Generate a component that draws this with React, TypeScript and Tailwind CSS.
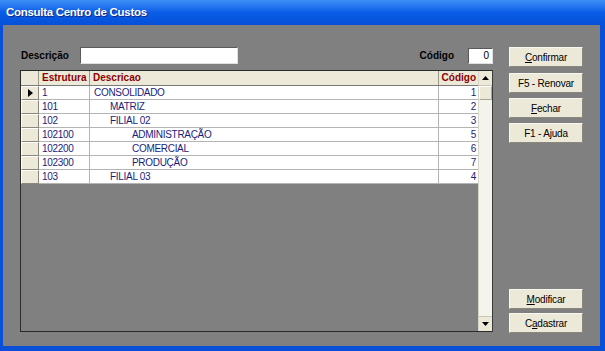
import React from 'react';

const font = { fontFamily: '"Liberation Sans", Arial, sans-serif' };

const rows = [
  { est: '1', desc: 'CONSOLIDADO', level: 0, cod: '1' },
  { est: '101', desc: 'MATRIZ', level: 1, cod: '2' },
  { est: '102', desc: 'FILIAL 02', level: 1, cod: '3' },
  { est: '102100', desc: 'ADMINISTRAÇÃO', level: 2, cod: '5' },
  { est: '102200', desc: 'COMERCIAL', level: 2, cod: '6' },
  { est: '102300', desc: 'PRODUÇÃO', level: 2, cod: '7' },
  { est: '103', desc: 'FILIAL 03', level: 1, cod: '4' },
];

const Btn: React.FC<{ children: React.ReactNode; className?: string }> = ({ children, className }) => (
  <div
    className={
      'h-[20px] w-[74px] flex items-center justify-center bg-[#ece9d8] border border-[#f7f6ef] border-r-[#8a887c] border-b-[#8a887c] text-[10px] text-black tracking-[-0.2px] ' +
      (className || '')
    }
  >
    {children}
  </div>
);

const Arrow: React.FC<{ down?: boolean }> = ({ down }) => (
  <svg width="7" height="4" viewBox="0 0 7 4">
    {down ? <polygon points="0,0 7,0 3.5,4" fill="#000" /> : <polygon points="0,4 7,4 3.5,0" fill="#000" />}
  </svg>
);

export default function App() {
  return (
    <div className="w-[605px] h-[351px] flex flex-col bg-[#0a4fd8]" style={font}>
      {/* barra de título */}
      <div className="h-[25px] flex items-center pl-[6px] bg-gradient-to-b from-[#3d8ff7] via-[#0a5ce6] to-[#0650d8]">
        <span className="text-white font-bold text-[11.5px] tracking-[-0.3px] [text-shadow:1px_1px_0_#0a2a8a]">
          Consulta Centro de Custos
        </span>
      </div>

      {/* corpo */}
      <div className="flex-1 flex items-start ml-[3px] mr-[5px] mb-[5px] bg-[#808080] pl-[17px] pt-[22px]">
        <div className="w-[473px] flex flex-col">
          <div className="h-[17px] flex items-center">
            <span className="ml-[1px] w-[59px] text-[10px] font-bold text-black">Descrição</span>
            <div className="w-[158px] h-[17px] bg-white border border-[#5a5a5a] border-r-[#e0e0e0] border-b-[#e0e0e0]" />
            <span className="ml-auto mr-[14px] text-[10px] font-bold text-black">Código</span>
            <div className="w-[25px] h-[16px] bg-white border border-[#5a5a5a] border-r-[#e0e0e0] border-b-[#e0e0e0] flex items-center justify-end pr-[3px] text-[10px] text-black">
              0
            </div>
          </div>

          {/* grade */}
          <div className="mt-[6px] h-[262px] flex border border-[#2a2a2a] border-r-[#3a3a3a]">
            <div className="flex-1 flex flex-col">
              <div className="h-[15px] flex bg-[#ece9d8] border-b border-[#7a7a7a] text-[10px] font-bold text-[#8b0000]">
                <div className="w-[18px] border-r border-[#9a9a90]" />
                <div className="w-[51px] pl-[3px] border-r border-[#9a9a90] leading-[14px]">Estrutura</div>
                <div className="w-[349px] pl-[3px] border-r border-[#9a9a90] leading-[14px]">Descricao</div>
                <div className="flex-1 pr-[2px] text-right leading-[14px]">Código</div>
              </div>
              {rows.map((r, i) => (
                <div key={i} className="h-[14px] flex text-[10px] tracking-[-0.3px] text-[#1c1c7a] leading-[13px]">
                  <div className="w-[18px] bg-[#ece9d8] border-t border-l border-white border-r border-r-[#8a887c] border-b border-b-[#8a887c] flex items-center justify-end pr-[5px]">
                    {i === 0 && (
                      <svg width="5" height="8" viewBox="0 0 5 8">
                        <polygon points="0,0 5,4 0,8" fill="#000" />
                      </svg>
                    )}
                  </div>
                  <div className="w-[51px] bg-white pl-[3px] border-r border-b border-[#b4b4b4]">{r.est}</div>
                  <div
                    className={
                      'w-[349px] bg-white border-r border-b border-[#b4b4b4] ' +
                      (r.level === 0 ? 'pl-[4px]' : r.level === 1 ? 'pl-[20px]' : 'pl-[42px]')
                    }
                  >
                    {r.desc}
                  </div>
                  <div className="flex-1 bg-white text-right pr-[2px] border-b border-[#b4b4b4]">{r.cod}</div>
                </div>
              ))}
            </div>

            {/* barra de rolagem */}
            <div className="w-[14px] flex flex-col bg-[#f4f3ec] border-l border-[#d8d6c8]">
              <div className="h-[15px] bg-[#ece9d8] flex items-center justify-center border-b border-[#c8c6b8]">
                <Arrow />
              </div>
              <div className="h-[14px] bg-[#ece9d8] border-t border-l border-white border-r border-r-[#a8a698] border-b border-b-[#a8a698]" />
              <div className="flex-1" />
              <div className="h-[15px] bg-[#ece9d8] flex items-center justify-center border-t border-[#c8c6b8]">
                <Arrow down />
              </div>
            </div>
          </div>
        </div>

        {/* botões */}
        <div className="ml-[16px] h-[286px] flex flex-col">
          <Btn>
            <span className="underline">C</span>onfirmar
          </Btn>
          <Btn className="mt-[6px]">F5 - Renovar</Btn>
          <Btn className="mt-[5px]">
            <span className="underline">F</span>echar
          </Btn>
          <Btn className="mt-[5px]">F1 - Ajuda</Btn>
          <Btn className="mt-auto">
            <span className="underline">M</span>odificar
          </Btn>
          <Btn className="mt-[4px]">
            C<span className="underline">a</span>dastrar
          </Btn>
        </div>
      </div>
    </div>
  );
}
